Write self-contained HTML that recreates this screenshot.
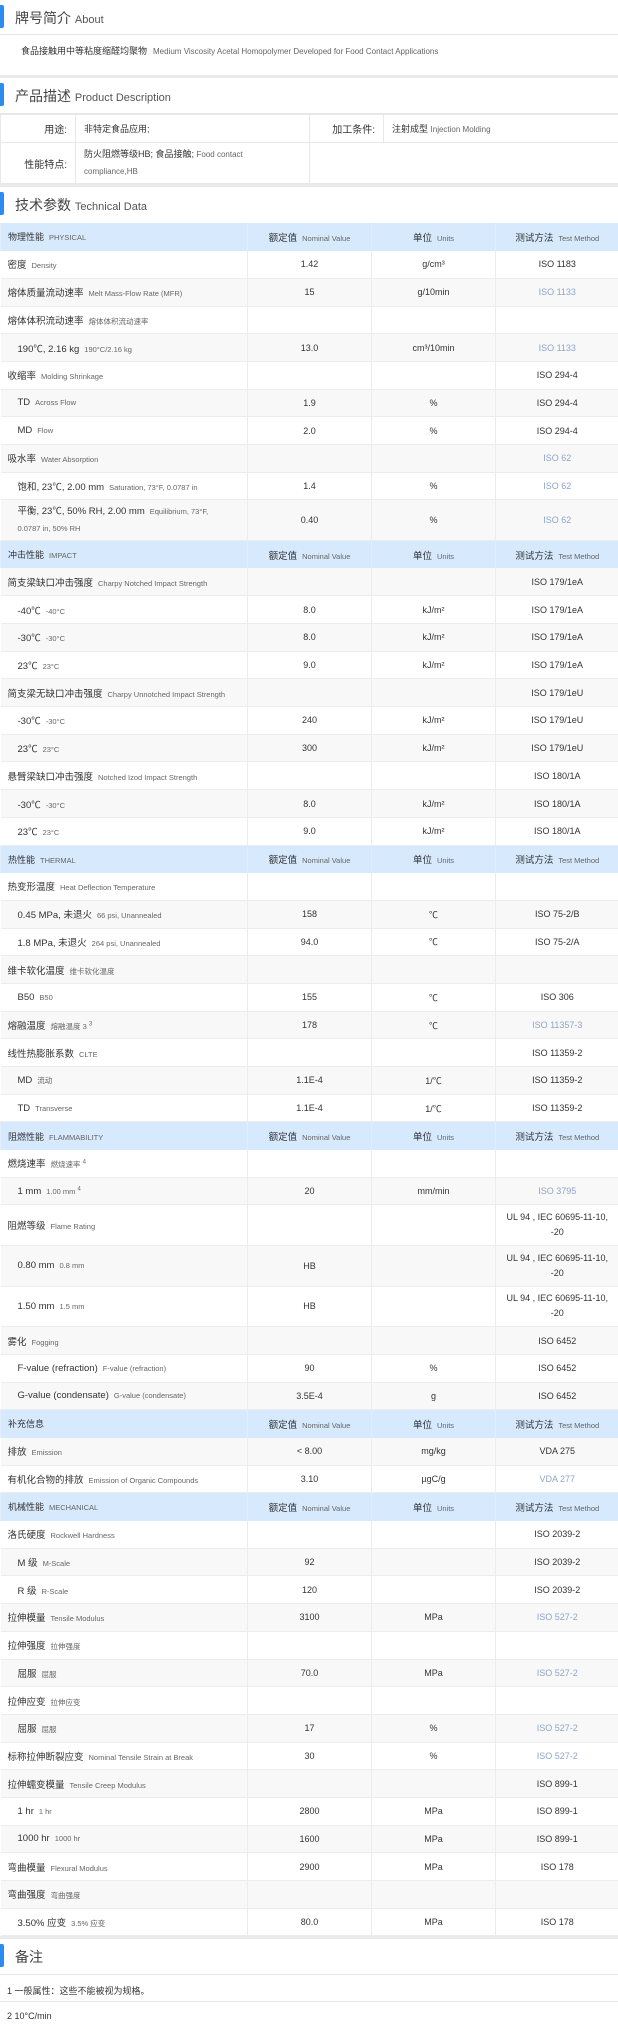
<!DOCTYPE html>
<html><head><meta charset="utf-8"><style>
*{margin:0;padding:0;box-sizing:border-box}
body{width:618px;height:2016px;background:#fff;font-family:"Liberation Sans","Noto Sans CJK SC",sans-serif;color:#333;overflow:hidden}
.h{height:35px;position:relative;border-bottom:1px solid #e6e6e6}
.h:before{content:"";position:absolute;left:0;top:5px;width:4px;height:23px;background:#2d8cf0;border-radius:0 2px 2px 0}
.h span{position:absolute;left:15px;top:8px;font-size:14px;color:#444}
.h span small{font-size:11px;color:#555}
.band{height:3px;background:#e9e9ee}
.about{height:40px;padding:9px 21px;font-size:9px}
.about i{font-style:normal;color:#666;font-size:8px;margin-left:6px}
table{border-collapse:collapse;table-layout:fixed;width:618px}
td{border:1px solid #e8e8e8;font-size:9px;vertical-align:middle}
.pd td{padding:0 8px}
.pd .l{text-align:right;font-size:10px}
.pd i{font-style:normal;color:#666;font-size:8px}
.t td{height:27.7px;text-align:center;border-left:1px solid #ececec;border-right:none;border-top:none;border-bottom:1px solid #ececec}
.t td:first-child{text-align:left;padding-left:7px;border-left:none}
.t tr:nth-child(odd) td{background:#f8f8f8}
.t tr.hd td{background:#d7e9fc;border-bottom:none;border-left:1px solid #e4eefa}
.t b{font-weight:normal;font-size:9.5px}
.t i{font-style:normal;font-size:7.5px;color:#666;margin-left:5px}
.t tr.s td:first-child{padding-left:17px}
.t tr.tl td{height:40.6px}
.t .bl{color:#8ea6c8}
.t sup{font-size:6px}
.n{height:27px;border-bottom:1px solid #e6e6e6;font-size:9px;padding:9px 7px}
</style></head><body>
<div class="h"><span>牌号简介 <small>About</small></span></div>
<div class="about">食品接触用中等粘度缩醛均聚物<i>Medium Viscosity Acetal Homopolymer Developed for Food Contact Applications</i></div>
<div class="band"></div>
<div class="h" style="height:36px"><span>产品描述 <small>Product Description</small></span></div>
<table class="pd">
<col style="width:75px"><col style="width:234px"><col style="width:74px"><col style="width:235px">
<tr style="height:28px"><td class="l">用途:</td><td>非特定食品应用;</td><td class="l">加工条件:</td><td>注射成型 <i>Injection Molding</i></td></tr>
<tr style="height:41px"><td class="l">性能特点:</td><td style="line-height:16px">防火阻燃等级HB; 食品接触; <i>Food contact<br>compliance,HB</i></td><td colspan="2" style="border-left:1px solid #e8e8e8"></td></tr>
</table>
<div class="band" style="margin-top:0"></div>
<div class="h" style="height:36px;border-bottom:none"><span>技术参数 <small>Technical Data</small></span></div>
<table class="t">
<col style="width:247px"><col style="width:124px"><col style="width:124px"><col style="width:123px">
<tr class="hd"><td>物理性能<i>PHYSICAL</i></td><td><b>额定值</b><i>Nominal Value</i></td><td><b>单位</b><i>Units</i></td><td><b>测试方法</b><i>Test Method</i></td></tr>
<tr><td><b>密度</b><i>Density</i></td><td>1.42</td><td>g/cm³</td><td>ISO 1183</td></tr>
<tr><td><b>熔体质量流动速率</b><i>Melt Mass-Flow Rate (MFR)</i></td><td>15</td><td>g/10min</td><td class="bl">ISO 1133</td></tr>
<tr><td><b>熔体体积流动速率</b><i>熔体体积流动速率</i></td><td></td><td></td><td></td></tr>
<tr class="s"><td><b>190℃, 2.16 kg</b><i>190°C/2.16 kg</i></td><td>13.0</td><td>cm³/10min</td><td class="bl">ISO 1133</td></tr>
<tr><td><b>收缩率</b><i>Molding Shrinkage</i></td><td></td><td></td><td>ISO 294-4</td></tr>
<tr class="s"><td><b>TD</b><i>Across Flow</i></td><td>1.9</td><td>%</td><td>ISO 294-4</td></tr>
<tr class="s"><td><b>MD</b><i>Flow</i></td><td>2.0</td><td>%</td><td>ISO 294-4</td></tr>
<tr><td><b>吸水率</b><i>Water Absorption</i></td><td></td><td></td><td class="bl">ISO 62</td></tr>
<tr class="s"><td><b>饱和, 23℃, 2.00 mm</b><i>Saturation, 73°F, 0.0787 in</i></td><td>1.4</td><td>%</td><td class="bl">ISO 62</td></tr>
<tr class="s tl"><td style="line-height:16px"><b>平衡, 23℃, 50% RH, 2.00 mm</b><i>Equilibrium, 73°F,</i><br><i style="margin-left:0">0.0787 in, 50% RH</i></td><td>0.40</td><td>%</td><td class="bl">ISO 62</td></tr>
<tr class="hd"><td>冲击性能<i>IMPACT</i></td><td><b>额定值</b><i>Nominal Value</i></td><td><b>单位</b><i>Units</i></td><td><b>测试方法</b><i>Test Method</i></td></tr>
<tr><td><b>简支梁缺口冲击强度</b><i>Charpy Notched Impact Strength</i></td><td></td><td></td><td>ISO 179/1eA</td></tr>
<tr class="s"><td><b>-40℃</b><i>-40°C</i></td><td>8.0</td><td>kJ/m²</td><td>ISO 179/1eA</td></tr>
<tr class="s"><td><b>-30℃</b><i>-30°C</i></td><td>8.0</td><td>kJ/m²</td><td>ISO 179/1eA</td></tr>
<tr class="s"><td><b>23℃</b><i>23°C</i></td><td>9.0</td><td>kJ/m²</td><td>ISO 179/1eA</td></tr>
<tr><td><b>简支梁无缺口冲击强度</b><i>Charpy Unnotched Impact Strength</i></td><td></td><td></td><td>ISO 179/1eU</td></tr>
<tr class="s"><td><b>-30℃</b><i>-30°C</i></td><td>240</td><td>kJ/m²</td><td>ISO 179/1eU</td></tr>
<tr class="s"><td><b>23℃</b><i>23°C</i></td><td>300</td><td>kJ/m²</td><td>ISO 179/1eU</td></tr>
<tr><td><b>悬臂梁缺口冲击强度</b><i>Notched Izod Impact Strength</i></td><td></td><td></td><td>ISO 180/1A</td></tr>
<tr class="s"><td><b>-30℃</b><i>-30°C</i></td><td>8.0</td><td>kJ/m²</td><td>ISO 180/1A</td></tr>
<tr class="s"><td><b>23℃</b><i>23°C</i></td><td>9.0</td><td>kJ/m²</td><td>ISO 180/1A</td></tr>
<tr class="hd"><td>热性能<i>THERMAL</i></td><td><b>额定值</b><i>Nominal Value</i></td><td><b>单位</b><i>Units</i></td><td><b>测试方法</b><i>Test Method</i></td></tr>
<tr><td><b>热变形温度</b><i>Heat Deflection Temperature</i></td><td></td><td></td><td></td></tr>
<tr class="s"><td><b>0.45 MPa, 未退火</b><i>66 psi, Unannealed</i></td><td>158</td><td>℃</td><td>ISO 75-2/B</td></tr>
<tr class="s"><td><b>1.8 MPa, 未退火</b><i>264 psi, Unannealed</i></td><td>94.0</td><td>℃</td><td>ISO 75-2/A</td></tr>
<tr><td><b>维卡软化温度</b><i>维卡软化温度</i></td><td></td><td></td><td></td></tr>
<tr class="s"><td><b>B50</b><i>B50</i></td><td>155</td><td>℃</td><td>ISO 306</td></tr>
<tr><td><b>熔融温度</b><i>熔融温度 3 <sup>3</sup></i></td><td>178</td><td>℃</td><td class="bl">ISO 11357-3</td></tr>
<tr><td><b>线性热膨胀系数</b><i>CLTE</i></td><td></td><td></td><td>ISO 11359-2</td></tr>
<tr class="s"><td><b>MD</b><i>流动</i></td><td>1.1E-4</td><td>1/℃</td><td>ISO 11359-2</td></tr>
<tr class="s"><td><b>TD</b><i>Transverse</i></td><td>1.1E-4</td><td>1/℃</td><td>ISO 11359-2</td></tr>
<tr class="hd"><td>阻燃性能<i>FLAMMABILITY</i></td><td><b>额定值</b><i>Nominal Value</i></td><td><b>单位</b><i>Units</i></td><td><b>测试方法</b><i>Test Method</i></td></tr>
<tr><td><b>燃烧速率</b><i>燃烧速率 <sup>4</sup></i></td><td></td><td></td><td></td></tr>
<tr class="s"><td><b>1 mm</b><i>1.00 mm <sup>4</sup></i></td><td>20</td><td>mm/min</td><td class="bl">ISO 3795</td></tr>
<tr class="tl"><td><b>阻燃等级</b><i>Flame Rating</i></td><td></td><td></td><td style="line-height:15px">UL 94 , IEC 60695-11-10,<br>-20</td></tr>
<tr class="s tl"><td><b>0.80 mm</b><i>0.8 mm</i></td><td>HB</td><td></td><td style="line-height:15px">UL 94 , IEC 60695-11-10,<br>-20</td></tr>
<tr class="s tl"><td><b>1.50 mm</b><i>1.5 mm</i></td><td>HB</td><td></td><td style="line-height:15px">UL 94 , IEC 60695-11-10,<br>-20</td></tr>
<tr><td><b>雾化</b><i>Fogging</i></td><td></td><td></td><td>ISO 6452</td></tr>
<tr class="s"><td><b>F-value (refraction)</b><i>F-value (refraction)</i></td><td>90</td><td>%</td><td>ISO 6452</td></tr>
<tr class="s"><td><b>G-value (condensate)</b><i>G-value (condensate)</i></td><td>3.5E-4</td><td>g</td><td>ISO 6452</td></tr>
<tr class="hd"><td>补充信息</td><td><b>额定值</b><i>Nominal Value</i></td><td><b>单位</b><i>Units</i></td><td><b>测试方法</b><i>Test Method</i></td></tr>
<tr><td><b>排放</b><i>Emission</i></td><td>&lt; 8.00</td><td>mg/kg</td><td>VDA 275</td></tr>
<tr><td><b>有机化合物的排放</b><i>Emission of Organic Compounds</i></td><td>3.10</td><td>µgC/g</td><td class="bl">VDA 277</td></tr>
<tr class="hd"><td>机械性能<i>MECHANICAL</i></td><td><b>额定值</b><i>Nominal Value</i></td><td><b>单位</b><i>Units</i></td><td><b>测试方法</b><i>Test Method</i></td></tr>
<tr><td><b>洛氏硬度</b><i>Rockwell Hardness</i></td><td></td><td></td><td>ISO 2039-2</td></tr>
<tr class="s"><td><b>M 级</b><i>M-Scale</i></td><td>92</td><td></td><td>ISO 2039-2</td></tr>
<tr class="s"><td><b>R 级</b><i>R-Scale</i></td><td>120</td><td></td><td>ISO 2039-2</td></tr>
<tr><td><b>拉伸模量</b><i>Tensile Modulus</i></td><td>3100</td><td>MPa</td><td class="bl">ISO 527-2</td></tr>
<tr><td><b>拉伸强度</b><i>拉伸强度</i></td><td></td><td></td><td></td></tr>
<tr class="s"><td><b>屈服</b><i>屈服</i></td><td>70.0</td><td>MPa</td><td class="bl">ISO 527-2</td></tr>
<tr><td><b>拉伸应变</b><i>拉伸应变</i></td><td></td><td></td><td></td></tr>
<tr class="s"><td><b>屈服</b><i>屈服</i></td><td>17</td><td>%</td><td class="bl">ISO 527-2</td></tr>
<tr><td><b>标称拉伸断裂应变</b><i>Nominal Tensile Strain at Break</i></td><td>30</td><td>%</td><td class="bl">ISO 527-2</td></tr>
<tr><td><b>拉伸蠕变模量</b><i>Tensile Creep Modulus</i></td><td></td><td></td><td>ISO 899-1</td></tr>
<tr class="s"><td><b>1 hr</b><i>1 hr</i></td><td>2800</td><td>MPa</td><td>ISO 899-1</td></tr>
<tr class="s"><td><b>1000 hr</b><i>1000 hr</i></td><td>1600</td><td>MPa</td><td>ISO 899-1</td></tr>
<tr><td><b>弯曲模量</b><i>Flexural Modulus</i></td><td>2900</td><td>MPa</td><td>ISO 178</td></tr>
<tr><td><b>弯曲强度</b><i>弯曲强度</i></td><td></td><td></td><td></td></tr>
<tr class="s"><td><b>3.50% 应变</b><i>3.5% 应变</i></td><td>80.0</td><td>MPa</td><td>ISO 178</td></tr>
</table>
<div class="band"></div>
<div class="h" style="height:36px"><span>备注</span></div>
<div class="n">1 一般属性：这些不能被视为规格。</div>
<div class="n" style="border-bottom:none">2 10°C/min</div>
</body></html>
